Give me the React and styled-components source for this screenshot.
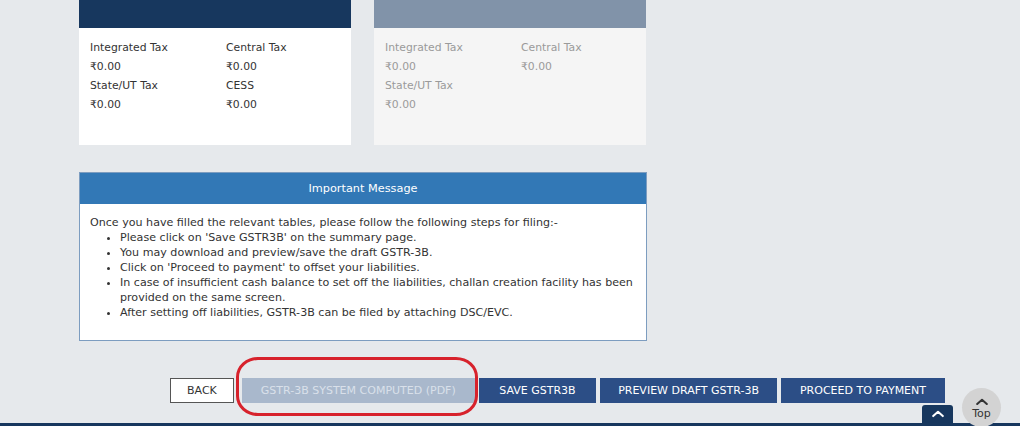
import React from "react";
import styled, { createGlobalStyle } from "styled-components";

const GlobalStyle = createGlobalStyle`
  html, body {
    margin: 0;
    padding: 0;
    background: #e6e9ec;
    font-family: "DejaVu Sans", Verdana, sans-serif;
    overflow: hidden;
  }
`;

const Page = styled.div`
  position: relative;
  width: 1020px;
  height: 426px;
  overflow: hidden;
  background: #e6e9ec;
`;

const Content = styled.div`
  padding-left: 79px;
  display: flex;
  flex-direction: column;
`;

const CardRow = styled.div`
  display: flex;
  gap: 23px;
`;

const Card = styled.div`
  width: 272px;
  height: 145px;
  background: ${(props) => (props.disabled ? "#f5f5f5" : "#ffffff")};
  display: flex;
  flex-direction: column;
`;

const CardHeader = styled.div`
  height: 28px;
  background: ${(props) => (props.disabled ? "#8193a9" : "#17375e")};
`;

const CardGrid = styled.div`
  display: grid;
  grid-template-columns: 136px 136px;
  padding: 10px 0 0 11px;
`;

const CardText = styled.div`
  font-size: 10.8px;
  line-height: 19px;
  color: ${(props) => (props.disabled ? "#9a9a9a" : "#333333")};
`;

const MessagePanel = styled.div`
  margin-top: 27px;
  width: 566px;
  height: 167px;
  background: #ffffff;
  border: 1px solid #7d9dc0;
  display: flex;
  flex-direction: column;
`;

const MessageHeader = styled.div`
  height: 31px;
  background: #3278b6;
  color: #ffffff;
  font-size: 11.3px;
  display: flex;
  align-items: center;
  justify-content: center;
`;

const MessageBody = styled.div`
  padding: 11px 4px 0 10px;
  font-size: 11.1px;
  line-height: 15px;
  color: #333333;
`;

const StepList = styled.ul`
  margin: 0;
  padding-left: 30px;
  list-style: disc;
`;

const ButtonRow = styled.div`
  margin-top: 37px;
  margin-left: 170px;
  display: flex;
  align-items: center;
  gap: 4px;
`;

const ActionButton = styled.button`
  height: 25px;
  box-sizing: border-box;
  padding: 0 ${(props) => props.pad || 20}px;
  margin-right: ${(props) => props.gapAfter || 0}px;
  font-family: "DejaVu Sans", Verdana, sans-serif;
  font-size: 11px;
  text-transform: uppercase;
  white-space: nowrap;
  cursor: pointer;
  border: ${(props) =>
    props.variant === "outline" ? "1px solid #555555" : "none"};
  background: ${(props) =>
    props.variant === "outline"
      ? "#ffffff"
      : props.variant === "disabled"
      ? "#a9b8cc"
      : "#2c4e86"};
  color: ${(props) =>
    props.variant === "outline"
      ? "#333333"
      : props.variant === "disabled"
      ? "#d9e0ea"
      : "#ffffff"};
`;

const Highlight = styled.div`
  position: absolute;
  left: 236px;
  top: 357px;
  width: 242px;
  height: 59px;
  box-sizing: border-box;
  border: 3px solid #d7222c;
  border-radius: 22px / 20px;
  pointer-events: none;
`;

const Footer = styled.div`
  position: absolute;
  left: 0;
  right: 0;
  bottom: 0;
  height: 3px;
  background: #17375e;
`;

const FooterTab = styled.div`
  position: absolute;
  left: 922px;
  bottom: 3px;
  width: 31px;
  height: 18px;
  border-radius: 3px 3px 0 0;
  background: #17375e;
  display: flex;
  align-items: center;
  justify-content: center;
`;

const TopButton = styled.div`
  position: absolute;
  left: 962px;
  top: 388px;
  width: 39px;
  height: 39px;
  border-radius: 50%;
  background: #d3d3d3;
  color: #333333;
  font-size: 11px;
  display: flex;
  flex-direction: column;
  align-items: center;
  gap: 3px;
  padding-top: 10px;
  box-sizing: border-box;
  line-height: 11px;
`;

const Chevron = ({ color, size }) => (
  <svg width={size} height={size * 0.6} viewBox="0 0 12 7">
    <path
      d="M1.2 6 L6 1.6 L10.8 6"
      fill="none"
      stroke={color}
      strokeWidth="2"
      strokeLinecap="round"
      strokeLinejoin="round"
    />
  </svg>
);

const TaxCard = ({ disabled, items }) => (
  <Card disabled={disabled}>
    <CardHeader disabled={disabled} />
    <CardGrid>
      {items.map((item, i) => (
        <React.Fragment key={i}>
          <CardText disabled={disabled}>{item[0]}</CardText>
          <CardText disabled={disabled}>{item[1]}</CardText>
        </React.Fragment>
      ))}
    </CardGrid>
  </Card>
);

const steps = [
  "Please click on 'Save GSTR3B' on the summary page.",
  "You may download and preview/save the draft GSTR-3B.",
  "Click on 'Proceed to payment' to offset your liabilities.",
  "In case of insufficient cash balance to set off the liabilities, challan creation facility has been provided on the same screen.",
  "After setting off liabilities, GSTR-3B can be filed by attaching DSC/EVC.",
];

const App = () => (
  <Page>
    <GlobalStyle />
    <Content>
      <CardRow>
        <TaxCard
          items={[
            ["Integrated Tax", "Central Tax"],
            ["₹0.00", "₹0.00"],
            ["State/UT Tax", "CESS"],
            ["₹0.00", "₹0.00"],
          ]}
        />
        <TaxCard
          disabled
          items={[
            ["Integrated Tax", "Central Tax"],
            ["₹0.00", "₹0.00"],
            ["State/UT Tax", ""],
            ["₹0.00", ""],
          ]}
        />
      </CardRow>
      <MessagePanel>
        <MessageHeader>Important Message</MessageHeader>
        <MessageBody>
          Once you have filled the relevant tables, please follow the following
          steps for filing:-
          <StepList>
            {steps.map((s) => (
              <li key={s}>{s}</li>
            ))}
          </StepList>
        </MessageBody>
      </MessagePanel>
    </Content>
    <ButtonRow>
      <ActionButton variant="outline" pad={16} gapAfter={4}>
        Back
      </ActionButton>
      <ActionButton variant="disabled" pad={19}>
        GSTR-3B System Computed (PDF)
      </ActionButton>
      <ActionButton pad={20.5}>Save GSTR3B</ActionButton>
      <ActionButton pad={18}>Preview Draft GSTR-3B</ActionButton>
      <ActionButton pad={19}>Proceed to Payment</ActionButton>
    </ButtonRow>
    <Highlight />
    <Footer />
    <FooterTab>
      <Chevron color="#ffffff" size={12} />
    </FooterTab>
    <TopButton>
      <Chevron color="#333333" size={12} />
      <span>Top</span>
    </TopButton>
  </Page>
);

export default App;
